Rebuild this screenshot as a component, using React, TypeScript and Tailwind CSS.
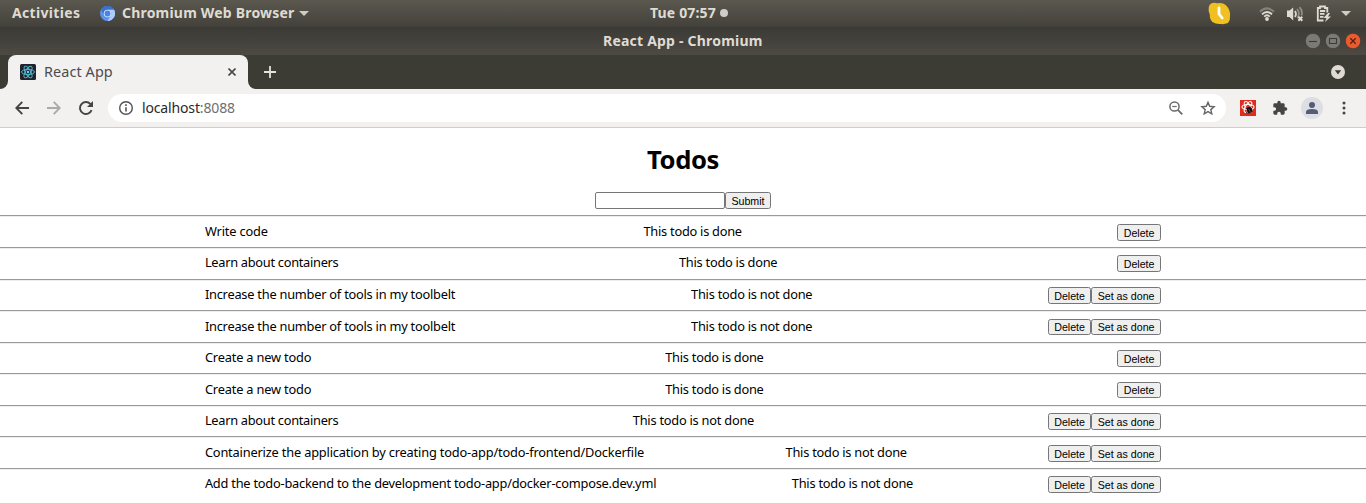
import { clsx } from "clsx";

type Todo = { text: string; done: boolean; textClass: string; rowClass: string; top: string; button: string };

const learn = "w-[134px] tracking-[-0.28px]";
const increase = "w-[250.5px] tracking-[-0.23px]";
const create = "w-[106.5px] tracking-[-0.18px]";

const todos: Todo[] = [
  { text: "Write code", done: true, textClass: "w-[63px] tracking-[-0.15px]", rowClass: "h-[32px]", top: "pt-[7px]", button: "h-[17px]" },
  { text: "Learn about containers", done: true, textClass: learn, rowClass: "h-[32px]", top: "pt-[6px]", button: "h-[17px]" },
  { text: "Increase the number of tools in my toolbelt", done: false, textClass: increase, rowClass: "h-[31px]", top: "pt-[6px]", button: "h-[17px]" },
  { text: "Increase the number of tools in my toolbelt", done: false, textClass: increase, rowClass: "h-[32px]", top: "pt-[7px]", button: "h-[16px]" },
  { text: "Create a new todo", done: true, textClass: create, rowClass: "h-[31px]", top: "pt-[6px]", button: "h-[17px]" },
  { text: "Create a new todo", done: true, textClass: create, rowClass: "h-[32px]", top: "pt-[7px]", button: "h-[16px]" },
  { text: "Learn about containers", done: false, textClass: learn, rowClass: "h-[31px]", top: "pt-[6px]", button: "h-[17px]" },
  { text: "Containerize the application by creating todo-app/todo-frontend/Dockerfile", done: false, textClass: "w-[439.5px] tracking-[-0.174px]", rowClass: "h-[32px]", top: "pt-[7px]", button: "h-[17px]" },
  { text: "Add the todo-backend to the development todo-app/docker-compose.dev.yml", done: false, textClass: "w-[452px] tracking-[-0.225px]", rowClass: "h-[34px]", top: "pt-[6px]", button: "h-[17px]" },
];

function Button({ children, className }: { children: string; className: string }) {
  return (
    <button
      className={clsx(
        "flex items-center justify-center rounded-[2.5px] border border-[#767676] bg-[#efefef] pt-px font-['Liberation_Sans',Arial,sans-serif] text-[10.67px] leading-none whitespace-nowrap text-black",
        className,
      )}
    >
      {children}
    </button>
  );
}

function TodoRow({ todo }: { todo: Todo }) {
  return (
    <li className={clsx("border-t border-[#9a9a9a]", todo.rowClass)}>
      <div className={clsx("h-full border-t border-[#eeeeee]", todo.top)}>
        <div className="mx-auto flex w-[70%] items-start justify-between text-[12.8px] leading-[15px] whitespace-nowrap">
          <span className={todo.textClass}>{todo.text}</span>
          <span className={todo.done ? "w-[98px] tracking-[-0.25px]" : "w-[121.5px] tracking-[-0.23px]"}>
            {todo.done ? "This todo is done" : "This todo is not done"}
          </span>
          <div className="flex">
            <Button className={clsx(todo.done ? "w-[44px]" : "w-[43px]", todo.button)}>Delete</Button>
            {!todo.done && <Button className={clsx("w-[70px]", todo.button)}>Set as done</Button>}
          </div>
        </div>
      </div>
    </li>
  );
}

function ChromiumIcon() {
  return (
    <svg className="h-[15px] w-[15px]" viewBox="0 0 16 16">
      <circle cx="8" cy="8" r="8" fill="#5b93ec" />
      <path d="M1.1 4A8 8 0 0 1 15 4H8a4 4 0 0 0-3.6 5.7z" fill="#3f70c9" />
      <path d="M15 4a8 8 0 0 1-7 12l3.5-6A4 4 0 0 0 8 4z" fill="#a9ccfb" />
      <circle cx="8" cy="8" r="4" fill="#d6e6fc" />
      <circle cx="8" cy="8" r="3.1" fill="#4a83e6" />
    </svg>
  );
}

function TopBar() {
  return (
    <div className="flex h-[27px] items-center bg-linear-to-b from-[#5b584f] to-[#43413b] text-[14px] font-bold whitespace-nowrap text-[#dfdbd2]">
      <span className="ml-3 w-[88px] pb-[2px] tracking-[0.33px]">Activities</span>
      <ChromiumIcon />
      <span className="ml-[7px] w-[172px] pb-[2px] tracking-[0.2px]">Chromium Web Browser</span>
      <svg className="ml-[5px] h-[5px] w-[10px]" viewBox="0 0 10 5"><path d="M0 0h10L5 5z" fill="#d0ccc4" /></svg>
      <span className="ml-[341px] w-[67px] pb-[2px] tracking-[0.17px]">Tue 07:57</span>
      <span className="ml-[3px] mb-px h-2 w-2 rounded-full bg-[#d0ccc6]" />
      <div className="ml-auto flex items-center pr-[15px]">
        <svg className="h-[23px] w-[23px]" viewBox="0 0 23 23">
          <path d="M3 1.5Q6 .3 9 1.2 16 0 19.500 5q3 4 2.500 9 .5 4-2 7-4 1.500-7 1Q8 22.500 4.500 20 1.500 17 1.800 12.500 0 9 .8 5q.5-2.500 2.200-3.500z" fill="#f0c020" />
          <path d="M11 6v6l3.200 4" fill="none" stroke="#fff" strokeWidth="2.800" strokeLinecap="round" />
        </svg>
        <svg className="ml-[28px] h-[14px] w-[16px]" viewBox="0 0 16 14" fill="none">
          <path d="M1 4.800Q8-2 15 4.800" stroke="#85827b" strokeWidth="2" />
          <path d="M3 7.400Q8 2.600 13 7.400M5.200 9.600Q8 7 10.800 9.600" stroke="#dfdbd2" strokeWidth="1.900" />
          <circle cx="8" cy="12" r="1.900" fill="#dfdbd2" />
        </svg>
        <svg className="ml-[11px] h-[16px] w-[18px]" viewBox="0 0 18 16" fill="none">
          <path d="M1 4.500h2.500L7.200 1.500v13l-3.700-3.500H1z" fill="#dfdbd2" />
          <path d="M9 5q2 3 0 6" stroke="#dfdbd2" strokeWidth="1.700" />
          <path d="M11 3q3.500 4 .5 9M13.500 1.200q3.500 4 2 8.300" stroke="#918e86" strokeWidth="1.800" />
          <path d="m12.300 10.800 4 4m0-4-4 4" stroke="#dfdbd2" strokeWidth="2" />
        </svg>
        <svg className="ml-[12px] h-[17px] w-[15px]" viewBox="0 0 15 17" fill="none" stroke="#dfdbd2" strokeWidth="1.800">
          <path d="M7.500 15.500H1.800V3H4V1.500h5V3h2.300v4.500M4 6h5.200M4 8.900h4.500M4 11.800h3.500" />
          <path d="m12 8-4.500 5h3l-1.500 4 6-5.500h-3L14 8z" fill="#dfdbd2" stroke="none" />
        </svg>
        <svg className="ml-[10px] h-[5px] w-[10px]" viewBox="0 0 10 5"><path d="M0 0h10L5 5z" fill="#d0ccc4" /></svg>
      </div>
    </div>
  );
}

function TitleBar() {
  return (
    <div className="grid h-[28px] grid-cols-[1fr_160px_1fr] items-center bg-linear-to-b from-[#3c3a36] to-[#4d4a43] whitespace-nowrap">
      <span className="col-start-2 pb-[2px] text-[14px] font-bold tracking-[0.21px] text-[#dfdbd2]">React App - Chromium</span>
      <div className="flex justify-end gap-1 pr-[5px]">
        <svg className="h-4 w-4" viewBox="0 0 16 16">
          <circle cx="8" cy="8" r="7.700" fill="#7c7a73" stroke="#34332f" strokeWidth=".6" />
          <path d="M4 8.500h8" stroke="#3c3b37" strokeWidth="1.100" />
        </svg>
        <svg className="h-4 w-4" viewBox="0 0 16 16">
          <circle cx="8" cy="8" r="7.700" fill="#7c7a73" stroke="#34332f" strokeWidth=".6" />
          <path d="M4.500 5.500h7v5h-7z" fill="none" stroke="#3c3b37" strokeWidth="1.100" />
        </svg>
        <svg className="h-4 w-4" viewBox="0 0 16 16">
          <circle cx="8" cy="8" r="7.700" fill="#ea5b30" stroke="#34332f" strokeWidth=".6" />
          <path d="m5.300 5.300 5.400 5.400m0-5.400-5.400 5.400" stroke="#53210f" strokeWidth="1.300" />
        </svg>
      </div>
    </div>
  );
}

function ReactIcon() {
  return (
    <svg className="h-4 w-4" viewBox="0 0 16 16" fill="none" stroke="#55bcd9" strokeWidth=".9">
      <rect width="16" height="16" rx="1.500" fill="#20232a" stroke="none" />
      <ellipse cx="8" cy="8" rx="6.500" ry="2.600" />
      <ellipse cx="8" cy="8" rx="6.500" ry="2.600" transform="rotate(60 8 8)" />
      <ellipse cx="8" cy="8" rx="6.500" ry="2.600" transform="rotate(120 8 8)" />
      <circle cx="8" cy="8" r="1.200" fill="#61dafb" stroke="none" />
    </svg>
  );
}

function TabStrip() {
  return (
    <div className="flex h-[34px] items-center bg-[#3c3c35]">
      <svg className="h-2 w-2 self-end" viewBox="0 0 8 8"><path d="M8 0v8H0a8 8 0 0 0 8-8z" fill="#f2f1f0" /></svg>
      <div className="flex h-full w-[240px] items-center rounded-t-lg bg-[#f2f1f0] pl-3">
        <ReactIcon />
        <span className="ml-2 text-[14.4px] tracking-[0.1px] whitespace-nowrap text-[#4c4c4c]">React App</span>
        <svg className="mr-[12px] ml-auto h-2 w-2" viewBox="0 0 8 8"><path d="m.500.500 7 7m0-7-7 7" stroke="#45494d" strokeWidth="1.600" /></svg>
      </div>
      <svg className="h-2 w-2 self-end" viewBox="0 0 8 8"><path d="M0 0v8h8a8 8 0 0 1-8-8z" fill="#f2f1f0" /></svg>
      <svg className="ml-2 h-3 w-3" viewBox="0 0 12 12"><path d="M6 0v12M0 6h12" stroke="#e3e2dc" strokeWidth="1.800" /></svg>
      <svg className="mr-[21px] ml-auto h-[14px] w-[14px]" viewBox="0 0 14 14">
        <circle cx="7" cy="7" r="7" fill="#dfdbd2" />
        <path d="M3.800 5.200h6.400L7 9.400z" fill="#3c3c35" />
      </svg>
    </div>
  );
}

function Toolbar() {
  return (
    <div className="flex h-[39px] items-center border-b border-[#cfcecd] bg-[#f2f1f0]">
      <svg className="ml-[15px] h-[14px] w-[14px]" viewBox="0 0 14 14" fill="none" stroke="#454545" strokeWidth="1.900"><path d="M14 7H1.500M7.300.900 1.300 7l6 6.100" /></svg>
      <svg className="ml-[18px] h-[14px] w-[14px]" viewBox="0 0 14 14" fill="none" stroke="#aaaaa9" strokeWidth="1.900"><path d="M0 7h12.500M6.700.900l6 6.100-6 6.100" /></svg>
      <svg className="ml-[18px] h-[14px] w-[14px]" viewBox="0 0 14 14">
        <path d="M12.600 9.200A6 6 0 1 1 11.300 2.800L12.800 4.300" fill="none" stroke="#454545" strokeWidth="1.900" />
        <path d="M14 0v6H8z" fill="#454545" />
      </svg>
      <div className="ml-[15px] flex h-7 w-[1118px] items-center rounded-full bg-white pr-[10px] pl-[11px]">
        <svg className="h-[14px] w-[14px]" viewBox="0 0 14 14" fill="none" stroke="#4f5256">
          <circle cx="7" cy="7" r="6.300" strokeWidth="1.400" />
          <path d="M7 6.200v4.300M7 3.300v1.600" strokeWidth="1.600" />
        </svg>
        <span className="ml-[9px] pb-[2px] text-[14px] tracking-[-0.15px] whitespace-nowrap text-[#292929]">
          localhost<span className="text-[#6f6f6f]">:8088</span>
        </span>
        <svg className="ml-auto h-[14px] w-[14px]" viewBox="0 0 14 14" fill="none" stroke="#6b6b6b">
          <circle cx="5.500" cy="5.500" r="4.600" strokeWidth="1.500" />
          <path d="m8.800 8.800 4.500 4.500" strokeWidth="1.900" />
          <path d="M3.300 5.500h4.400" strokeWidth="1.200" />
        </svg>
        <svg className="ml-[17px] h-4 w-4" viewBox="0 0 16 16" fill="none" stroke="#666" strokeWidth="1.400">
          <path d="m8 2.300 1.700 4 4.400.400-3.300 2.900 1 4.200L8 11.600l-3.800 2.200 1-4.200-3.300-2.900 4.400-.4z" />
        </svg>
      </div>
      <svg className="ml-[14px] h-4 w-4" viewBox="0 0 16 16">
        <path fill="#e02c1d" d="M0 0h16v16H0z" />
        <g fill="none" stroke="#fff" strokeWidth="1.100">
          <ellipse cx="8" cy="7" rx="6" ry="2.500" />
          <ellipse cx="8" cy="7" rx="6" ry="2.500" transform="rotate(60 8 7)" />
          <ellipse cx="8" cy="7" rx="6" ry="2.500" transform="rotate(120 8 7)" />
        </g>
        <ellipse cx="9.500" cy="10" rx="2.600" ry="3.200" fill="#111" transform="rotate(-30 9.500 10)" />
        <path d="m5.500 8 7 3.500m-6.500 1.500 6-5m-4 5.800 3-7.500" stroke="#111" strokeWidth=".8" />
        <path d="m8.500 9 2.200 3.500" stroke="#e02c1d" strokeWidth=".7" />
      </svg>
      <svg className="ml-[16px] h-4 w-4" viewBox="0 0 24 24" fill="#454545">
        <path d="M20.500 11H19V7c0-1.100-.9-2-2-2h-4V3.500a2.500 2.500 0 0 0-5 0V5H4c-1.100 0-2 .9-2 2v3.800h1.500a2.700 2.700 0 0 1 0 5.400H2V20c0 1.100.9 2 2 2h3.800v-1.500a2.700 2.700 0 0 1 5.400 0V22H17c1.100 0 2-.9 2-2v-4h1.500a2.500 2.500 0 0 0 0-5z" />
      </svg>
      <svg className="ml-[13px] h-[22px] w-[22px]" viewBox="0 0 22 22">
        <circle cx="11" cy="11" r="11" fill="#dcdee4" />
        <circle cx="11" cy="8" r="3" fill="#565c77" />
        <path d="M5 17v-2q0-3 6-3t6 3v2z" fill="#565c77" />
      </svg>
      <svg className="ml-[19px] h-[14px] w-[4px]" viewBox="0 0 4 14" fill="#454545">
        <circle cx="2" cy="2" r="1.500" /><circle cx="2" cy="7" r="1.500" /><circle cx="2" cy="12" r="1.500" />
      </svg>
    </div>
  );
}

export default function App() {
  return (
    <div className="h-[503px] w-full overflow-hidden bg-white font-['Noto_Sans',sans-serif] text-black">
      <TopBar />
      <TitleBar />
      <TabStrip />
      <Toolbar />
      <main>
        <h1 className="flex h-[64px] items-center justify-center text-[25.6px] leading-none font-bold tracking-[-0.4px]">Todos</h1>
        <form className="flex h-[23px] items-start justify-center" onSubmit={(e) => e.preventDefault()}>
          <input aria-label="Todo" className="h-[17px] w-[130px] rounded-[2px] border border-[#767676] bg-white px-0.5 text-[10.67px]" />
          <Button className="h-[17px] w-[46px]">Submit</Button>
        </form>
        <ul>
          {todos.map((todo, i) => (
            <TodoRow key={i} todo={todo} />
          ))}
        </ul>
      </main>
    </div>
  );
}
